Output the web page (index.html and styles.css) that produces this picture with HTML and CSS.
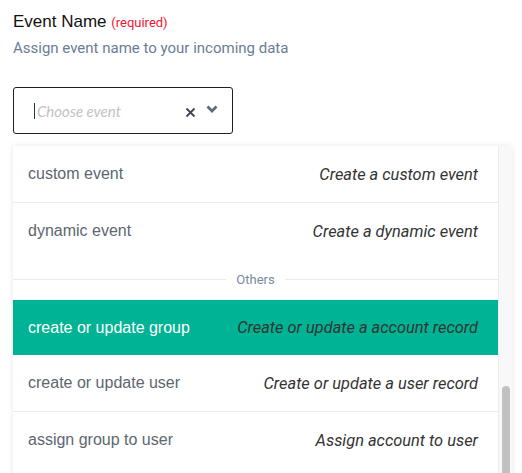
FILE: index.html
```html
<!DOCTYPE html>
<html lang="en">
<head>
  <meta charset="UTF-8" />
  <meta name="viewport" content="width=device-width, initial-scale=1.0" />
  <title>Event Name</title>
  <link rel="stylesheet" href="styles.css">
</head>
<body>
  <div class="field">
    <div class="label">Event Name <span class="required">(required)</span></div>
    <div class="hint">Assign event name to your incoming data</div>

    <div class="select">
      <span class="caret"></span>
      <span class="placeholder">Choose event</span>
      <span class="clear">
        <svg width="11" height="11" viewBox="0 0 11 11"><path d="M1.5 1.5 L9.5 9.5 M9.5 1.5 L1.5 9.5" stroke="#3d4650" stroke-width="1.8" fill="none"/></svg>
      </span>
      <span class="arrow">
        <svg width="12" height="8" viewBox="0 0 12 8"><path d="M1.5 1.5 L6 6 L10.5 1.5" stroke="#5b6b7e" stroke-width="2.8" fill="none"/></svg>
      </span>
    </div>

    <div class="menu">
      <div class="options">
        <div class="option bordered">
          <span class="name">custom event</span>
          <span class="desc">Create a custom event</span>
        </div>
        <div class="option">
          <span class="name">dynamic event</span>
          <span class="desc">Create a dynamic event</span>
        </div>
        <div class="group">Others</div>
        <div class="option active">
          <span class="name">create or update group</span>
          <span class="desc">Create or update a account record</span>
        </div>
        <div class="option bordered">
          <span class="name">create or update user</span>
          <span class="desc">Create or update a user record</span>
        </div>
        <div class="option">
          <span class="name">assign group to user</span>
          <span class="desc">Assign account to user</span>
        </div>
      </div>
      <div class="track">
        <div class="thumb"></div>
      </div>
    </div>
  </div>
</body>
</html>
```

FILE: styles.css
```css
* {
  margin: 0;
  padding: 0;
  box-sizing: border-box;
}

html, body {
  height: 100%;
  overflow: hidden;
  background: #fff;
  font-family: 'Liberation Sans', Arial, sans-serif;
}

.field {
  padding: 11px 13px 0;
}

.label {
  font-size: 17px;
  line-height: 21px;
  color: #111;
}

.required {
  font-family: Roboto, sans-serif;
  font-size: 13px;
  color: #f0142f;
}

.hint {
  margin-top: 6px;
  font-family: Roboto, sans-serif;
  font-size: 15px;
  line-height: 18px;
  color: #6a7d95;
}

.select {
  margin-top: 30px;
  width: 220px;
  height: 47px;
  border: 1px solid #1c1f23;
  border-radius: 3px;
  display: flex;
  align-items: center;
  padding: 0 14px 0 20px;
}

.caret {
  width: 1px;
  height: 16px;
  background: #2a3440;
  margin-right: 2px;
}

.placeholder {
  flex: 1;
  font-family: Lato, sans-serif;
  font-style: italic;
  font-size: 15px;
  color: #c2c2c2;
}

.clear {
  display: flex;
  margin-top: 3px;
  margin-right: 10px;
}

.arrow {
  display: flex;
  margin-top: -4px;
}

.menu {
  margin-top: 12px;
  width: 499px;
  height: 340px;
  display: flex;
  background: #fff;
  box-shadow: 0 0 6px rgba(0, 0, 0, 0.1);
}

.options {
  flex: 1;
}

.option {
  height: 56px;
  display: flex;
  align-items: center;
  justify-content: space-between;
  padding: 0 20px 0 15px;
}

.option.bordered {
  border-bottom: 1px solid #ececec;
  height: 57px;
}

.name {
  font-size: 16px;
  color: #5d6670;
}

.desc {
  font-family: Roboto, sans-serif;
  font-style: italic;
  font-size: 16.4px;
  color: #333;
}

.option.active {
  height: 55px;
  background: #00b394;
}

.option.active .name {
  color: #fff;
}

.group {
  height: 41px;
  display: flex;
  align-items: center;
  gap: 10px;
  font-family: Roboto, sans-serif;
  font-size: 13px;
  color: #7a8aa0;
}

.group::before,
.group::after {
  content: "";
  flex: 1;
  height: 1px;
  background: #ebebeb;
}

.track {
  width: 14px;
  background: #f8f8f8;
  border-left: 1px solid #ececec;
  padding: 240px 0 0 3px;
}

.thumb {
  width: 8px;
  height: 200px;
  background: #c1c1c1;
  border-radius: 4px;
}
```
